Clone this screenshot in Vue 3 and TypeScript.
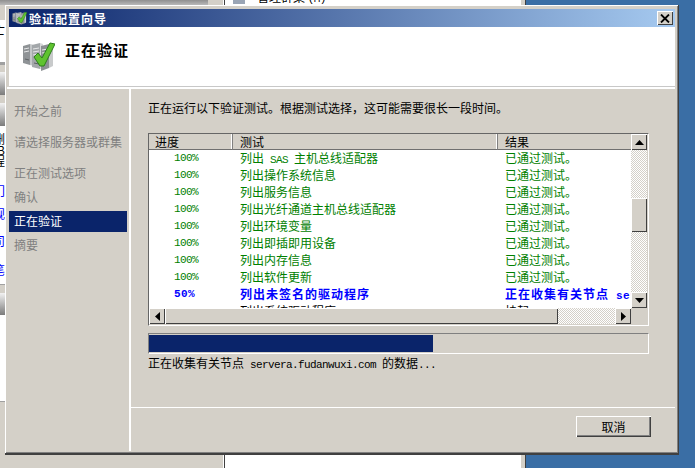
<script setup lang="ts">
type Row = { pct: string; name: string; result: string; state: 'done' | 'active' | 'waiting' }

const steps = [
  { label: '开始之前', tall: true },
  { label: '请选择服务器或群集', tall: true },
  { label: '正在测试选项' },
  { label: '确认' },
  { label: '正在验证', active: true },
  { label: '摘要' },
]

const passed = '已通过测试。'
const rows: Row[] = [
  { pct: '100%', name: '列出 SAS 主机总线适配器', result: passed, state: 'done' },
  { pct: '100%', name: '列出操作系统信息', result: passed, state: 'done' },
  { pct: '100%', name: '列出服务信息', result: passed, state: 'done' },
  { pct: '100%', name: '列出光纤通道主机总线适配器', result: passed, state: 'done' },
  { pct: '100%', name: '列出环境变量', result: passed, state: 'done' },
  { pct: '100%', name: '列出即插即用设备', result: passed, state: 'done' },
  { pct: '100%', name: '列出内存信息', result: passed, state: 'done' },
  { pct: '100%', name: '列出软件更新', result: passed, state: 'done' },
  { pct: '50%', name: '列出未签名的驱动程序', result: '正在收集有关节点 servera.fudanwuxi.com 的数据...', state: 'active' },
  { pct: '', name: '列出系统驱动程序', result: '挂起', state: 'waiting' },
]

const progress = 57

// 左边露出来的后面那个窗口
const strip = [
  { h: 20, kind: 'clear' },
  { h: 20, kind: 'white', text: '亡' },
  { h: 22, kind: 'white' },
  { h: 3, kind: 'line' },
  { h: 7, kind: 'clear' },
  { h: 23, kind: 'grad' },
  { h: 8, kind: 'clear' },
  { h: 23, kind: 'grad' },
  { h: 7, kind: 'white' },
  { h: 12, kind: 'white', text: '删' },
  { h: 10, kind: 'white', text: 'B' },
  { h: 12, kind: 'white', text: '程' },
  { h: 17, kind: 'white' },
  { h: 14, kind: 'white link', text: '门' },
  { h: 9, kind: 'white' },
  { h: 14, kind: 'white link', text: '规' },
  { h: 13, kind: 'white' },
  { h: 14, kind: 'white link', text: '司' },
  { h: 15, kind: 'white' },
  { h: 14, kind: 'white link', text: '笔' },
  { h: 7, kind: 'white' },
  { h: 1, kind: 'line' },
  { h: 8, kind: 'clear' },
  { h: 22, kind: 'grad' },
  { h: 86, kind: 'white' },
  { h: 1, kind: 'line' },
]

// 中文和西文宽度不一样，分开排
const parts = (text: string) => text.match(/[\x00-\x7f]+|[^\x00-\x7f]+/g) ?? []
const isLatin = (part: string) => /^[\x00-\x7f]/.test(part)
</script>

<template>
  <div class="desktop">
    <svg class="defs" width="0" height="0" aria-hidden="true">
      <symbol id="wizard-icon" viewBox="0 0 33 30">
        <polygon points="1,4 8,2 8,23 1,21" fill="#8f9396" />
        <polygon points="8,2 12,3 12,24 8,23" fill="#c3c6c8" />
        <polygon points="10,3 18,1 18,27 10,25" fill="#a3a7aa" />
        <polygon points="18,1 21,2 21,27 18,27" fill="#d6d8d9" />
        <polygon points="19,4 27,2 27,26 19,29" fill="#8c9093" />
        <polygon points="27,2 31,4 31,24 27,26" fill="#c8cacb" />
        <path d="M2 7l5-1M2 10l5-1M11 7l6-1M11 10l6-1M11 13l6-1M20 8l6-1M20 11l6-1" stroke="#e6e7e8" fill="none" />
        <path d="M3 17l4 1M12 21l5 1" stroke="#5d6164" fill="none" />
        <polygon points="12,15 16,11 20,16 28,1 33,2 22,24 18,24" fill="#5fc32f" stroke="#2c7d1c" stroke-width="1" />
      </symbol>
    </svg>

    <div class="backdrop">
      <div class="back-left">
        <div class="strip">
          <div
            v-for="(slice, i) in strip"
            :key="i"
            class="slice"
            :class="slice.kind"
            :style="{ height: slice.h + 'px' }"
          >
            {{ slice.text }}
          </div>
        </div>
      </div>
      <div class="back-right">
        <div class="back-menu">
          <svg class="back-icon" width="14" height="14" viewBox="0 0 14 14">
            <rect x="1" y="0" width="12" height="14" fill="#9aa5b5" />
            <path d="M2 3h10M2 6h10" stroke="#e8ecf2" />
          </svg>
          <span class="back-label">管理群集 <span class="mono">(M)</span></span>
        </div>
      </div>
    </div>

    <div class="dialog">
      <div class="titlebar">
        <svg class="title-icon" width="15" height="15"><use href="#wizard-icon" /></svg>
        <span class="title-text">验证配置向导</span>
        <button class="close-btn" aria-label="关闭">
          <svg width="10" height="9" viewBox="0 0 10 9">
            <path d="M1 0.5l8 8M9 0.5l-8 8" stroke="#000" stroke-width="1.8" fill="none" />
          </svg>
        </button>
      </div>

      <div class="banner">
        <svg class="banner-icon" width="33" height="30"><use href="#wizard-icon" /></svg>
        <h1 class="banner-title">正在验证</h1>
      </div>

      <div class="body">
        <nav class="steps">
          <div
            v-for="step in steps"
            :key="step.label"
            class="step"
            :class="{ tall: step.tall, active: step.active }"
          >
            {{ step.label }}
          </div>
        </nav>

        <div class="panel">
          <div class="main">
            <p class="intro">正在运行以下验证测试。根据测试选择，这可能需要很长一段时间。</p>

            <div class="listbox">
              <div class="viewport">
                <div class="list-row list-head">
                  <div class="head-cell">进度</div>
                  <div class="head-cell">测试</div>
                  <div class="head-cell">结果</div>
                </div>
                <div v-for="row in rows" :key="row.name" class="list-row" :class="row.state">
                  <div class="cell pct mono">{{ row.pct }}</div>
                  <div class="cell">
                    <span v-for="(part, i) in parts(row.name)" :key="i" :class="{ mono: isLatin(part) }">{{ part }}</span>
                  </div>
                  <div class="cell">
                    <span v-for="(part, i) in parts(row.result)" :key="i" :class="{ mono: isLatin(part) }">{{ part }}</span>
                  </div>
                </div>
              </div>

              <div class="vscroll">
                <div class="sb-btn">
                  <svg width="9" height="5" viewBox="0 0 9 5"><polygon points="4.5,0 9,5 0,5" /></svg>
                </div>
                <div class="sb-track vertical"><div class="sb-thumb vthumb"></div></div>
                <div class="sb-btn">
                  <svg width="9" height="5" viewBox="0 0 9 5"><polygon points="0,0 9,0 4.5,5" /></svg>
                </div>
              </div>

              <div class="hscroll">
                <div class="sb-btn">
                  <svg width="5" height="9" viewBox="0 0 5 9"><polygon points="5,0 5,9 0,4.5" /></svg>
                </div>
                <div class="sb-track horizontal"><div class="sb-thumb hthumb"></div></div>
                <div class="sb-btn">
                  <svg width="5" height="9" viewBox="0 0 5 9"><polygon points="0,0 5,4.5 0,9" /></svg>
                </div>
              </div>
              <div class="corner"></div>
            </div>

            <div class="progress">
              <div class="progress-bar" :style="{ width: progress + '%' }"></div>
            </div>
            <p class="status">正在收集有关节点<span class="mono"> servera.fudanwuxi.com </span>的数据<span class="mono">...</span></p>
          </div>

          <div class="footer">
            <button class="cancel">取消</button>
          </div>
        </div>
      </div>
    </div>
  </div>
</template>

<style scoped>
.desktop {
  position: relative;
  width: 695px;
  height: 468px;
  overflow: hidden;
  background: #3a6ea5;
  font-family: "Noto Sans CJK SC", "Liberation Sans", sans-serif;
  font-size: 12px;
  color: #000;
}
.defs {
  position: absolute;
}
.mono {
  font-family: "Liberation Mono", monospace;
  font-size: 11px;
  letter-spacing: -0.6px;
  white-space: pre;
}

/* 后面的窗口 */
.backdrop {
  position: absolute;
  left: 0;
  top: 0;
  width: 525px;
  height: 468px;
  display: flex;
}
.back-left {
  width: 224px;
  background: linear-gradient(#8f8f8f, #b9b9b9) no-repeat 0 0 / 208px 5px, #d4d0c8;
  border-right: 1px solid #fff;
  box-sizing: border-box;
}
.strip {
  width: 5px;
  overflow: hidden;
  display: flex;
  flex-direction: column;
}
.slice {
  display: flex;
  justify-content: flex-end;
  align-items: center;
  white-space: nowrap;
  line-height: 12px;
}
.slice.white {
  background: #fff;
}
.slice.link {
  color: #0000ff;
}
.slice.line {
  background: #a0a0a0;
}
.slice.grad {
  background: linear-gradient(#f2f2f2, #7c7c7c);
}
.back-right {
  flex: 1;
  background: #fff;
  border-left: 1px solid #404040;
  border-right: 4px solid #d4d0c8;
  box-shadow: 1px 0 0 #404040;
  overflow: hidden;
}
.back-menu {
  display: flex;
  align-items: flex-end;
  height: 5px;
  margin-left: 7px;
}
.back-icon {
  flex: none;
  margin-bottom: 1px;
}
.back-label {
  flex: none;
  margin-left: 11px;
  line-height: 14px;
  margin-bottom: -1px;
}

/* 对话框 */
.dialog {
  position: absolute;
  left: 5px;
  top: 5px;
  width: 674px;
  height: 450px;
  box-sizing: border-box;
  padding: 2px 3px 2px 2px;
  background: #d4d0c8;
  border-right: 1px solid #404040;
  border-bottom: 2px solid #404040;
  box-shadow: inset 1px 1px 0 #fff, inset -1px -1px 0 #808080;
  display: flex;
  flex-direction: column;
}
.titlebar {
  flex: none;
  height: 18px;
  margin: 2px 0 0 2px;
  display: flex;
  align-items: center;
  padding: 0 2px 0 3px;
  background: linear-gradient(90deg, #0a246a, #a6caf0);
}
.title-icon {
  flex: none;
}
.title-text {
  margin-left: 2px;
  font-weight: 700;
  letter-spacing: 1px;
  color: #fff;
}
.close-btn {
  flex: none;
  width: 16px;
  height: 14px;
  margin-left: auto;
  padding: 0;
  display: flex;
  align-items: center;
  justify-content: center;
  background: #d4d0c8;
  border: none;
  box-shadow: inset 1px 1px 0 #fff, inset -1px -1px 0 #404040;
}
.banner {
  flex: none;
  height: 60px;
  margin-left: 2px;
  box-sizing: border-box;
  display: flex;
  align-items: flex-start;
  background: #fff;
  border-bottom: 1px solid #c8c8c8;
}
.banner-icon {
  flex: none;
  margin: 15px 0 0 13px;
}
.banner-title {
  margin: 14px 0 0 10px;
  font-size: 15px;
  font-weight: 700;
  letter-spacing: 1px;
  line-height: 18px;
}
.body {
  flex: 1;
  min-height: 0;
  display: flex;
  border-top: 2px solid #fff;
}
.steps {
  flex: none;
  width: 124px;
  box-sizing: border-box;
  padding: 12px 2px 0;
  border-right: 2px solid #fff;
}
.step {
  height: 21px;
  line-height: 19px;
  margin-bottom: 3px;
  padding-left: 5px;
  color: #808080;
  white-space: nowrap;
}
.step.tall {
  margin-bottom: 10px;
}
.step.active {
  background: #0a246a;
  color: #fff;
}
.panel {
  flex: 1;
  min-width: 0;
  display: flex;
  flex-direction: column;
}
.main {
  flex: 1;
  min-height: 0;
  padding: 11px 0 0 17px;
}
.intro {
  margin: 0;
  line-height: 16px;
  white-space: nowrap;
}

/* 列表 */
.listbox {
  width: 501px;
  height: 193px;
  margin-top: 17px;
  box-sizing: border-box;
  display: grid;
  grid-template-columns: 482px 17px;
  grid-template-rows: 174px 17px;
  background: #d4d0c8;
  border-style: solid;
  border-width: 1px;
  border-color: #666 #fff #fff #666;
}
.viewport {
  overflow: hidden;
  background: #fff;
}
.list-row {
  display: grid;
  grid-template-columns: 84px 265px 133px;
  height: 17px;
  line-height: 15px;
  white-space: nowrap;
}
.list-row.done {
  color: #008000;
}
.list-row.active {
  color: #0000ff;
  font-weight: 700;
  letter-spacing: 1px;
}
.list-row.active .mono {
  letter-spacing: 0.4px;
}
.list-head {
  height: 16px;
  line-height: 15px;
  background: #d4d0c8;
}
.head-cell {
  box-sizing: border-box;
  padding-left: 6px;
  border-bottom: 1px solid #707070;
  border-right: 1px solid #808080;
  box-shadow: inset -1px 0 0 #fff;
}
.head-cell + .head-cell {
  padding-left: 7px;
}
.head-cell:last-child {
  border-right: none;
  box-shadow: none;
}
.cell {
  overflow: hidden;
  padding-left: 7px;
}
.cell.pct {
  padding-left: 25px;
  line-height: 17px;
}

/* 滚动条 */
.vscroll {
  display: flex;
  flex-direction: column;
  padding-right: 1px;
}
.hscroll {
  display: flex;
  padding-bottom: 1px;
}
.corner {
  background: #d4d0c8;
}
.sb-btn {
  flex: none;
  width: 16px;
  height: 16px;
  display: flex;
  align-items: center;
  justify-content: center;
  background: #d4d0c8;
  box-shadow: inset 1px 1px 0 #fff, inset -1px -1px 0 #404040;
}
.sb-track {
  flex: 1;
  background: repeating-conic-gradient(#d4d0c8 0 25%, #fff 0 50%) 0 0 / 2px 2px;
}
.sb-thumb {
  background: #d4d0c8;
  box-shadow: inset 1px 1px 0 #fff, inset -1px -1px 0 #404040;
}
.vthumb {
  height: 34px;
  margin-top: 48px;
}
.hthumb {
  width: 393px;
  height: 16px;
}

/* 进度条 */
.progress {
  width: 501px;
  height: 21px;
  margin-top: 7px;
  box-sizing: border-box;
  padding: 1px 0;
  border-style: solid;
  border-width: 1px;
  border-color: #808080 #fff #fff #808080;
}
.progress-bar {
  height: 17px;
  background: #0a246a;
}
.status {
  margin: 1px 0 0;
  line-height: 16px;
  white-space: nowrap;
}
.footer {
  flex: none;
  height: 44px;
  box-sizing: border-box;
  padding: 8px 24px 0 0;
  display: flex;
  justify-content: flex-end;
  align-items: flex-start;
  border-top: 1px solid #fff;
}
.cancel {
  width: 75px;
  height: 21px;
  padding: 0;
  background: #d4d0c8;
  border: none;
  box-shadow: inset 1px 1px 0 #fff, inset -1px -1px 0 #404040, inset -2px -2px 0 #808080;
  font: inherit;
  line-height: 19px;
  color: #000;
}
</style>
